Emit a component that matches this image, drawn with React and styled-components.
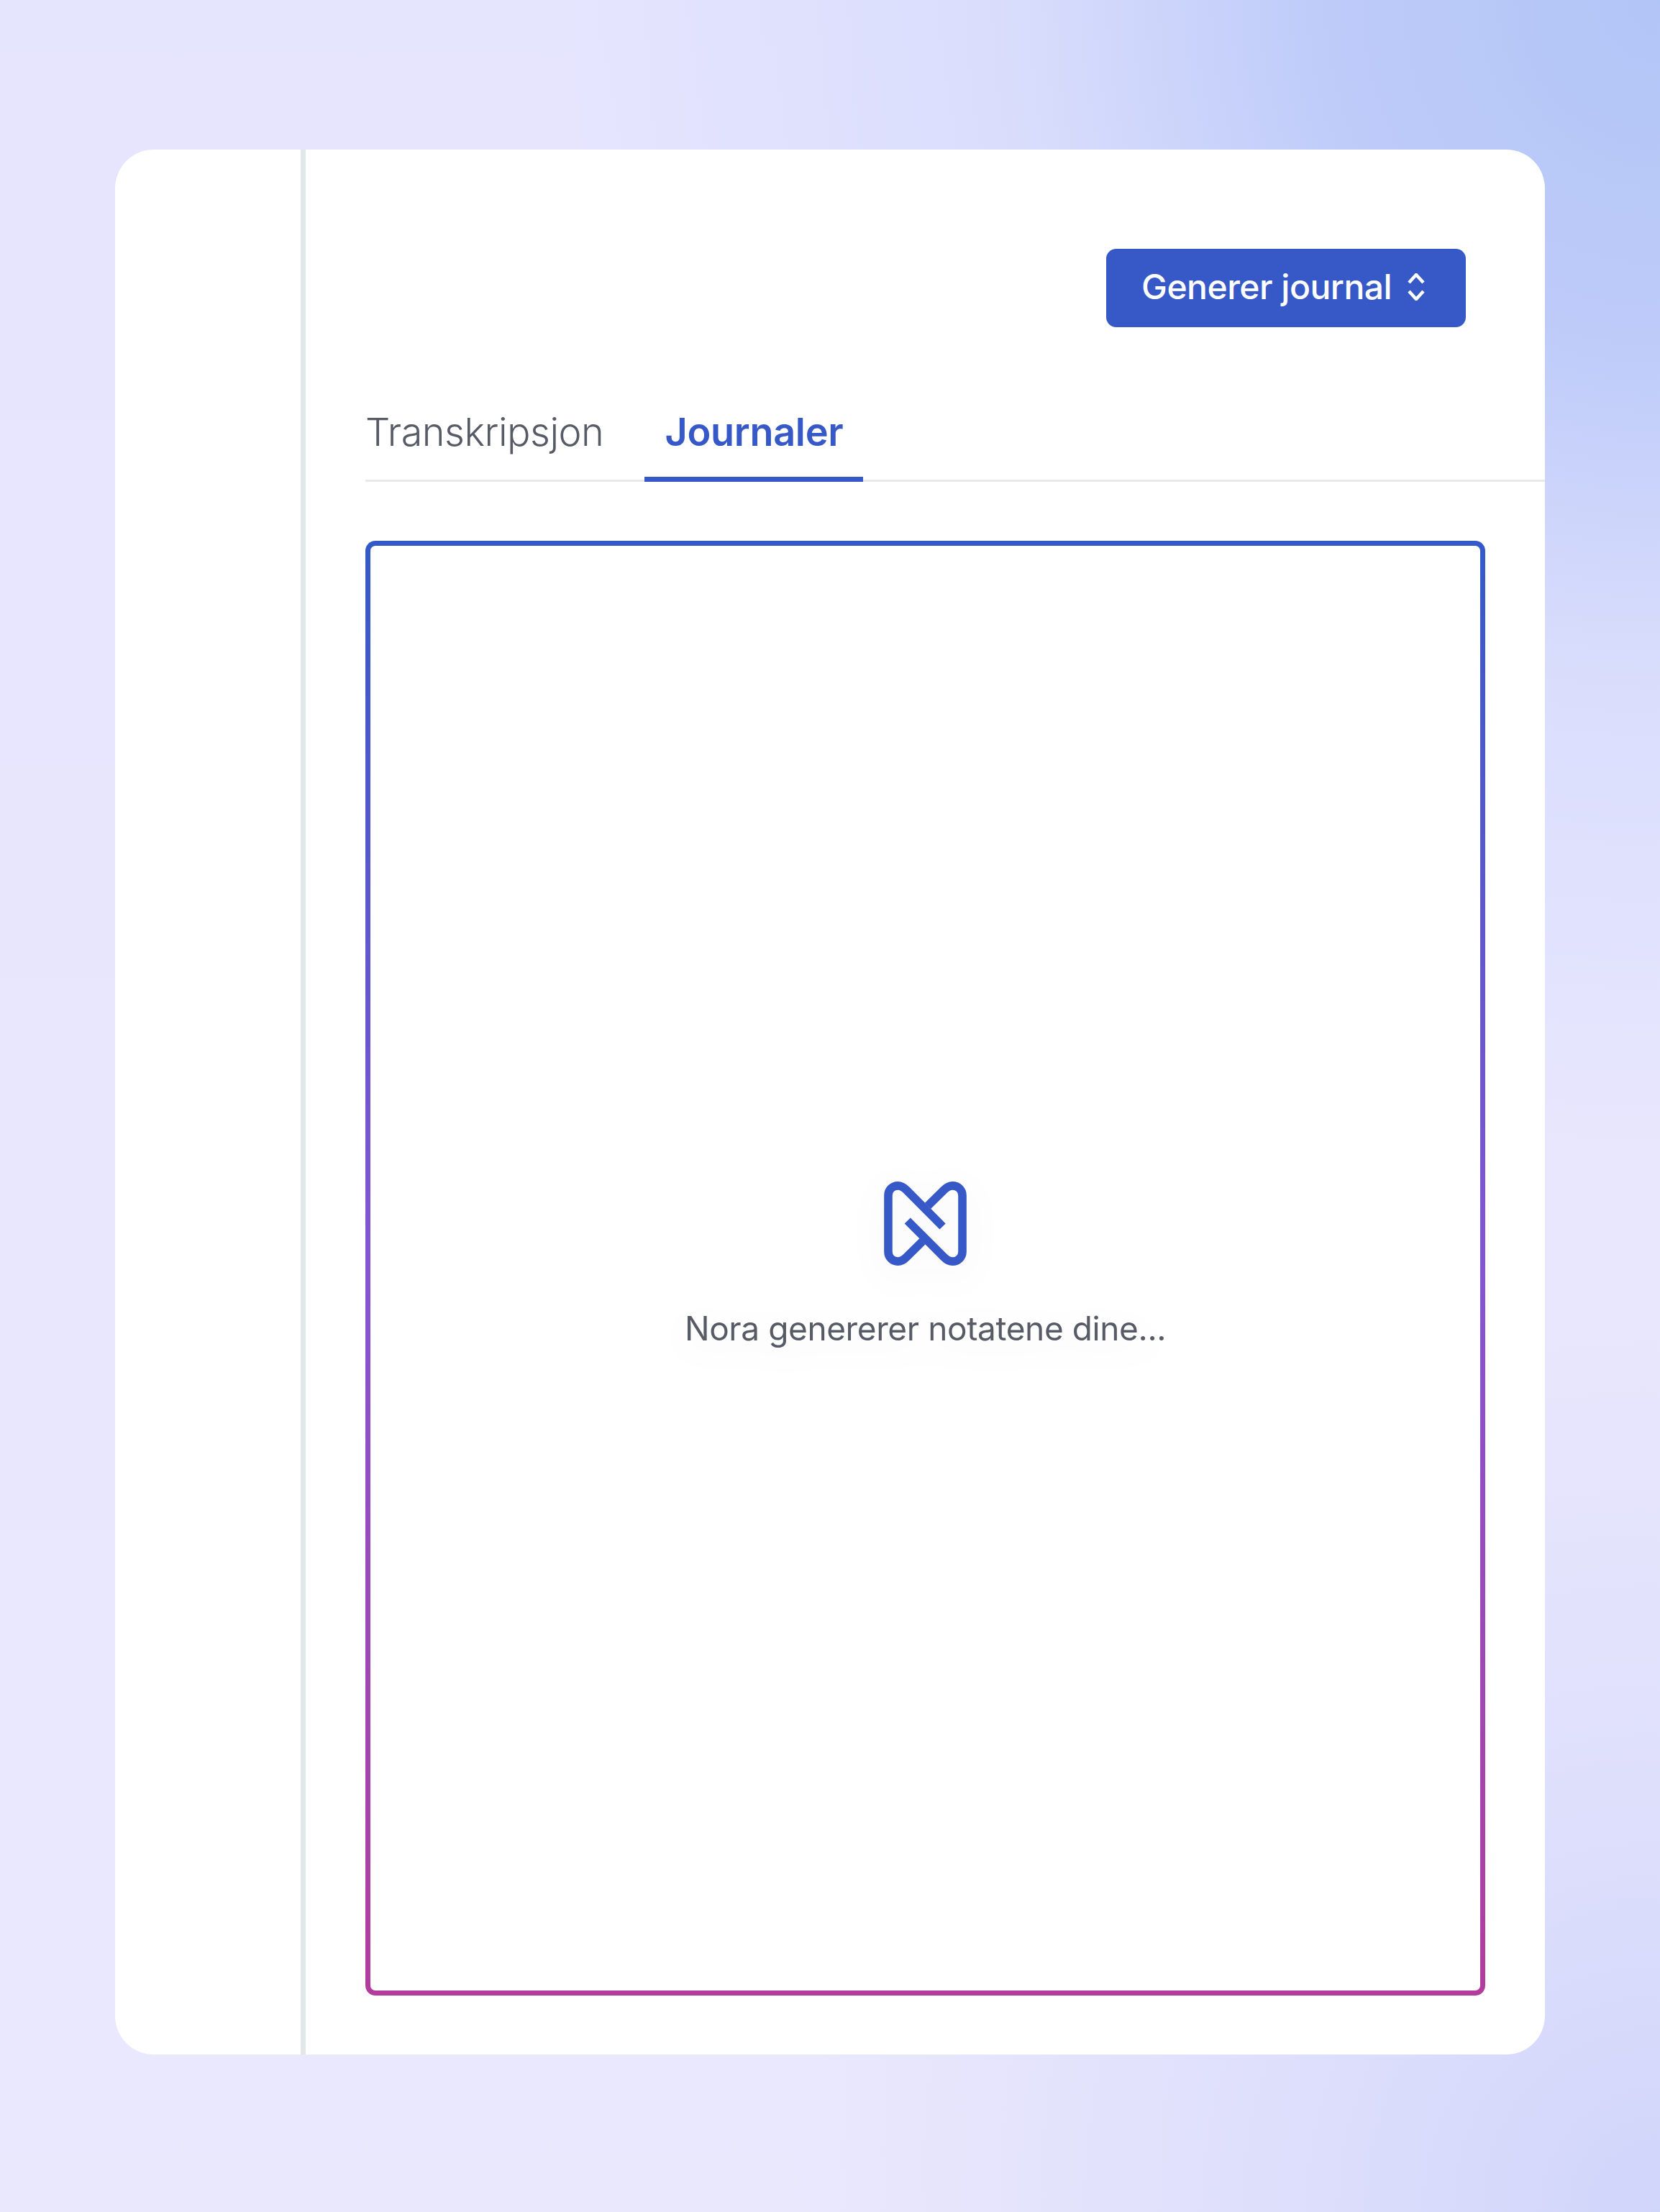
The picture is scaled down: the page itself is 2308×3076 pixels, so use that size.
import React from "react";
import styled, { createGlobalStyle } from "styled-components";

const Global = createGlobalStyle`
  html, body { margin: 0; padding: 0; }
  body { font-family: "Inter", "Liberation Sans", sans-serif; }
`;

const Page = styled.div`
  box-sizing: border-box;
  width: 2308px;
  height: 3076px;
  padding: 208px 160px 219px;
  background:
    radial-gradient(ellipse 1550px 1600px at 100% 0, #b1c5f6 0%, #becbf9 30%, #d9ddfc 58%, rgba(230, 229, 254, 0) 100%),
    radial-gradient(ellipse 1200px 1250px at 100% 100%, #d0d5fa 0%, rgba(218, 220, 251, 0.75) 45%, rgba(233, 232, 253, 0) 100%),
    linear-gradient(180deg, #e6e5fe 0%, #eae8fd 100%);
`;

const Card = styled.div`
  display: flex;
  height: 100%;
  background: #fff;
  border-radius: 54px;
  overflow: hidden;
`;

const Sidebar = styled.aside`
  flex: 0 0 265px;
  box-sizing: border-box;
  border-right: 7px solid #e2e8e9;
`;

const Main = styled.main`
  flex: 1;
  min-width: 0;
  display: flex;
  flex-direction: column;
  padding: 138px 0 82px 83px;
`;

const Toolbar = styled.div`
  display: flex;
  justify-content: flex-end;
  padding-right: 110px;
`;

const GenerateButton = styled.button`
  display: flex;
  align-items: center;
  gap: 22px;
  box-sizing: border-box;
  width: 500px;
  height: 109px;
  padding: 0 0 4px 49px;
  border: 0;
  border-radius: 14px;
  background: #3659c7;
  color: #fff;
  font: 500 48px/1 "Inter", sans-serif;
  letter-spacing: -0.5px;
  white-space: nowrap;
`;

const Tabs = styled.div`
  display: flex;
  margin-top: 100px;
  height: 115px;
  box-sizing: border-box;
  border-bottom: 3px solid #e6eaed;
`;

const Tab = styled.div`
  box-sizing: border-box;
  height: 115px;
  margin-left: ${(p) => (p.$active ? "57px" : "0")};
  padding: 0 ${(p) => (p.$active ? "28px" : "0")};
  border-bottom: ${(p) => (p.$active ? "7px solid #3659c7" : "0")};
  color: ${(p) => (p.$active ? "#3659c7" : "#575b66")};
  font: ${(p) => (p.$active ? 600 : 300)} 54px/91px "Inter", sans-serif;
  letter-spacing: ${(p) => (p.$active ? "-0.3px" : "-0.5px")};
  white-space: nowrap;
`;

const Frame = styled.section`
  flex: 1;
  box-sizing: border-box;
  margin: 82px 83px 0 0;
  display: flex;
  flex-direction: column;
  align-items: center;
  justify-content: center;
  border: 7px solid transparent;
  border-radius: 14px;
  background:
    linear-gradient(#fff, #fff) padding-box,
    linear-gradient(180deg, #3459c8 0%, #8555d3 50%, #b33c9c 100%) border-box;
`;

const Loader = styled.div`
  display: flex;
  flex-direction: column;
  align-items: center;
  gap: 59px;
  margin-bottom: 9px;
  filter: drop-shadow(0 12px 24px rgba(30, 30, 60, 0.05));
`;

const Message = styled.p`
  margin: 0;
  color: #575b66;
  font: 400 46px/56px "Inter", sans-serif;
  letter-spacing: -0.4px;
  white-space: nowrap;
`;

const Chevrons = () => (
  <svg width="24" height="38" viewBox="0 0 24 38" fill="none" stroke="#fff" strokeWidth="4.5">
    <path d="M2 13 12 2l10 11M2 25l10 11 10-11" />
  </svg>
);

const Logo = () => (
  <svg width="115" height="117" viewBox="237 130 345 352" fill="none" stroke="#3659c7" strokeWidth="35">
    <path d="M482 318 330 165C318 153 307 147.5 295 147.5C272 147.5 254.5 165 254.5 188V423C254.5 447 272 464.5 295 464.5C307 464.5 318 459 330 447L398 380" />
    <path d="M335 294 488 447C500 459 511 464.5 523 464.5C546 464.5 564.5 447 564.5 423V188C564.5 165 546 147.5 523 147.5C511 147.5 500 153 488 165L420 232" />
  </svg>
);

export default function App() {
  return (
    <>
      <Global />
      <Page>
        <Card>
          <Sidebar />
          <Main>
            <Toolbar>
              <GenerateButton>
                Generer journal
                <Chevrons />
              </GenerateButton>
            </Toolbar>
            <Tabs>
              <Tab>Transkripsjon</Tab>
              <Tab $active>Journaler</Tab>
            </Tabs>
            <Frame>
              <Loader>
                <Logo />
                <Message>Nora genererer notatene dine...</Message>
              </Loader>
            </Frame>
          </Main>
        </Card>
      </Page>
    </>
  );
}
